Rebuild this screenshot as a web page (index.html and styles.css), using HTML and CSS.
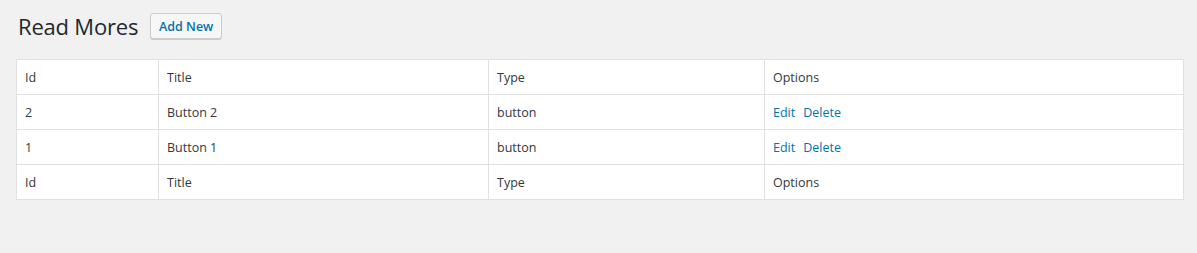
FILE: index.html
```html
<!DOCTYPE html>
<html>
<head>
<meta charset="utf-8">
<link rel="stylesheet" href="styles.css">
</head>
<body>
<div class="wrap">
  <div class="head">
    <h1 class="title">Read Mores</h1>
    <a class="add-new" href="#">Add New</a>
  </div>
  <table class="list">
    <thead>
      <tr><th class="c-id">Id</th><th class="c-title">Title</th><th class="c-type">Type</th><th class="c-opt">Options</th></tr>
    </thead>
    <tbody>
      <tr><td>2</td><td>Button 2</td><td>button</td><td><a href="#">Edit</a><a href="#">Delete</a></td></tr>
      <tr><td>1</td><td>Button 1</td><td>button</td><td><a href="#">Edit</a><a href="#">Delete</a></td></tr>
    </tbody>
    <tfoot>
      <tr><th>Id</th><th>Title</th><th>Type</th><th>Options</th></tr>
    </tfoot>
  </table>
</div>
</body>
</html>
```
FILE: styles.css
```css
html, body {
  margin: 0;
  padding: 0;
  background: #f1f1f1;
  font-family: "Open Sans", "Noto Sans", sans-serif;
  color: #32373c;
  font-size: 13px;
}
.wrap {
  padding: 13px 14px 0 16px;
}
.head {
  display: flex;
  align-items: center;
  gap: 12px;
  height: 26px;
  padding-left: 2px;
}
.title {
  margin: 0;
  font-size: 22px;
  font-weight: 400;
  color: #23282d;
  line-height: 26px;
  letter-spacing: -0.2px;
}
.add-new {
  display: inline-flex;
  align-items: center;
  justify-content: center;
  box-sizing: border-box;
  width: 72px;
  height: 26px;
  border: 1px solid #ccc;
  border-radius: 3px;
  background: #f7f7f7;
  color: #0073aa;
  font-weight: 600;
  font-size: 12.5px;
  text-decoration: none;
  box-shadow: 0 1px 0 #ccc;
}
.list {
  margin-top: 20px;
  width: 1168px;
  border-collapse: collapse;
  background: #fff;
  border: 1px solid #e1e1e1;
}
.list th, .list td {
  border: 1px solid #e1e1e1;
  height: 34px;
  box-sizing: border-box;
  padding: 0 8px;
  text-align: left;
  font-weight: 400;
  font-size: 12.5px;
  color: #32373c;
}
.list tr { height: 35px; }
.c-id { width: 142px; }
.c-title { width: 330px; }
.c-type { width: 276px; }
.list a {
  color: #0073aa;
  text-decoration: none;
  margin-right: 8px;
}
```
